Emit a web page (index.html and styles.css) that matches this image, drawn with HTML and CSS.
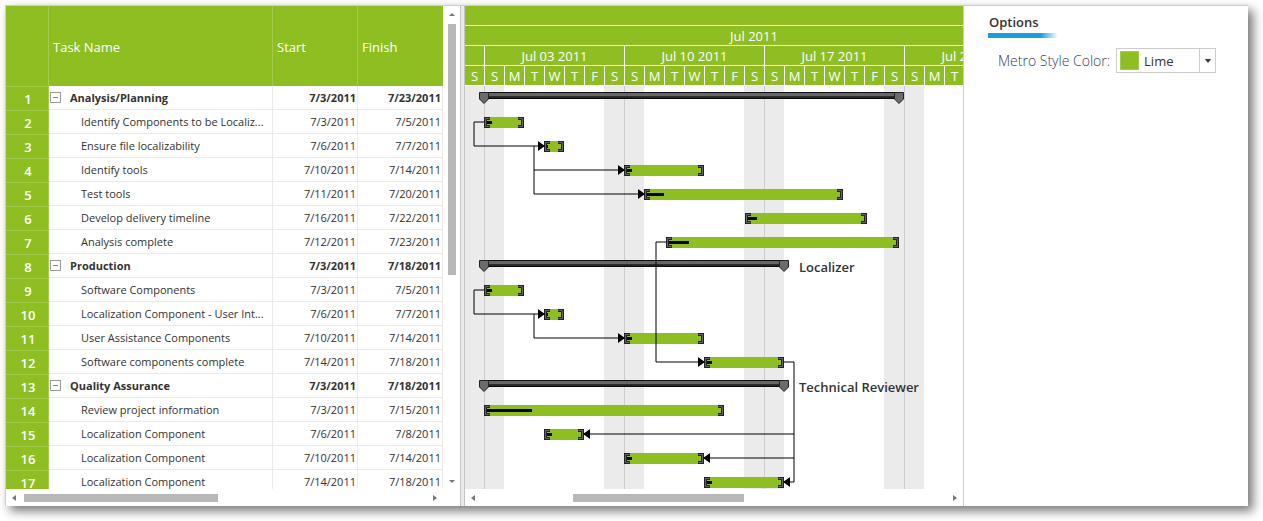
FILE: index.html
```html
<!DOCTYPE html>
<html lang="en">
<head>
<meta charset="utf-8">
<title>Gantt</title>
<link rel="stylesheet" href="styles.css">
</head>
<body>
<main class="panel">
  <section class="grid-pane">
    <div class="grid-main">
      <div class="grid-view">
        <table class="tasks">
          <colgroup><col class="col-num"><col class="col-name"><col class="col-date"><col class="col-date"></colgroup>
          <thead><tr><th></th><th>Task Name</th><th>Start</th><th>Finish</th></tr></thead>
          <tbody>
            <tr class="summary"><th>1</th><td><button class="toggle" aria-label="Collapse"></button>Analysis/Planning</td><td>7/3/2011</td><td>7/23/2011</td></tr>
            <tr><th>2</th><td>Identify Components to be Localiz...</td><td>7/3/2011</td><td>7/5/2011</td></tr>
            <tr><th>3</th><td>Ensure file localizability</td><td>7/6/2011</td><td>7/7/2011</td></tr>
            <tr><th>4</th><td>Identify tools</td><td>7/10/2011</td><td>7/14/2011</td></tr>
            <tr><th>5</th><td>Test tools</td><td>7/11/2011</td><td>7/20/2011</td></tr>
            <tr><th>6</th><td>Develop delivery timeline</td><td>7/16/2011</td><td>7/22/2011</td></tr>
            <tr><th>7</th><td>Analysis complete</td><td>7/12/2011</td><td>7/23/2011</td></tr>
            <tr class="summary"><th>8</th><td><button class="toggle" aria-label="Collapse"></button>Production</td><td>7/3/2011</td><td>7/18/2011</td></tr>
            <tr><th>9</th><td>Software Components</td><td>7/3/2011</td><td>7/5/2011</td></tr>
            <tr><th>10</th><td>Localization Component - User Int...</td><td>7/6/2011</td><td>7/7/2011</td></tr>
            <tr><th>11</th><td>User Assistance Components</td><td>7/10/2011</td><td>7/14/2011</td></tr>
            <tr><th>12</th><td>Software components complete</td><td>7/14/2011</td><td>7/18/2011</td></tr>
            <tr class="summary"><th>13</th><td><button class="toggle" aria-label="Collapse"></button>Quality Assurance</td><td>7/3/2011</td><td>7/18/2011</td></tr>
            <tr><th>14</th><td>Review project information</td><td>7/3/2011</td><td>7/15/2011</td></tr>
            <tr><th>15</th><td>Localization Component</td><td>7/6/2011</td><td>7/8/2011</td></tr>
            <tr><th>16</th><td>Localization Component</td><td>7/10/2011</td><td>7/14/2011</td></tr>
            <tr><th>17</th><td>Localization Component</td><td>7/14/2011</td><td>7/18/2011</td></tr>
          </tbody>
        </table>
      </div>
      <div class="vbar"><i class="arrow up"></i><div class="track"><div class="thumb"></div></div><i class="arrow down"></i></div>
    </div>
    <div class="hbar hbar-grid"><i class="arrow left"></i><div class="track"><div class="thumb"></div></div><i class="arrow right"></i></div>
  </section>
  <div class="splitter"></div>
  <section class="chart-pane">
    <div class="timeline">
      <div class="scale"></div>
      <div class="scale months"><span>Jul 2011</span></div>
      <div class="scale weeks"><span></span><span>Jul 03 2011</span><span>Jul 10 2011</span><span>Jul 17 2011</span><span>Jul 24 2011</span></div>
      <div class="scale days"><span>S</span><span>S</span><span>M</span><span>T</span><span>W</span><span>T</span><span>F</span><span>S</span><span>S</span><span>M</span><span>T</span><span>W</span><span>T</span><span>F</span><span>S</span><span>S</span><span>M</span><span>T</span><span>W</span><span>T</span><span>F</span><span>S</span><span>S</span><span>M</span><span>T</span></div>
    </div>
    <svg class="chart">
      <defs>
        <linearGradient id="sum" x1="0" y1="0" x2="0" y2="1">
          <stop offset="0" stop-color="#111"/><stop offset=".14" stop-color="#111"/><stop offset=".15" stop-color="#666"/><stop offset=".57" stop-color="#666"/><stop offset=".58" stop-color="#333"/><stop offset=".8" stop-color="#222"/><stop offset="1" stop-color="#000"/>
        </linearGradient>
        <symbol id="pin" width="10" height="13" overflow="visible"><path d="M.5 .5h9v6.500l-4.500 4.500l-4.500-4.500z" fill="#6c6c6c" stroke="#222"/></symbol>
        <symbol id="lb" width="6" height="11"><path d="M0 0h6v3h-3v5h3v3h-6z" fill="#222"/><path d="M5.500 1.500h-4v8h4" fill="none" stroke="#666"/></symbol>
        <symbol id="rb" width="6" height="11"><path d="M6 0h-6v3h3v5h-3v3h6z" fill="#222"/><path d="M.5 1.500h4v8h-4" fill="none" stroke="#666"/></symbol>
      </defs>
      <g class="weekend"><rect x="0" width="39" height="100%"/><rect x="139" width="40" height="100%"/><rect x="279" width="40" height="100%"/><rect x="419" width="40" height="100%"/></g>
      <g class="week-line"><rect x="19" width="1" height="100%"/><rect x="159" width="1" height="100%"/><rect x="299" width="1" height="100%"/><rect x="439" width="1" height="100%"/></g>

      <g fill="url(#sum)"><rect x="19" y="6" width="415" height="7"/><rect x="19" y="174" width="300" height="7"/><rect x="19" y="294" width="300" height="7"/></g>
      <use href="#pin" x="14" y="6"/><use href="#pin" x="429" y="6"/>
      <use href="#pin" x="14" y="174"/><use href="#pin" x="314" y="174"/>
      <use href="#pin" x="14" y="294"/><use href="#pin" x="314" y="294"/>

      <g class="bar">
        <rect x="19" y="31" width="40" height="11"/>
        <rect x="79" y="55" width="20" height="11"/>
        <rect x="159" y="79" width="80" height="11"/>
        <rect x="179" y="103" width="199" height="11"/>
        <rect x="280" y="127" width="122" height="11"/>
        <rect x="201" y="151" width="233" height="11"/>
        <rect x="19" y="199" width="40" height="11"/>
        <rect x="79" y="223" width="20" height="11"/>
        <rect x="159" y="247" width="80" height="11"/>
        <rect x="239" y="271" width="80" height="11"/>
        <rect x="19" y="319" width="240" height="11"/>
        <rect x="79" y="343" width="40" height="11"/>
        <rect x="159" y="367" width="80" height="11"/>
        <rect x="239" y="391" width="80" height="11"/>
      </g>
      <use href="#lb" x="19" y="31"/><use href="#rb" x="53" y="31"/>
      <use href="#lb" x="79" y="55"/><use href="#rb" x="93" y="55"/>
      <use href="#lb" x="159" y="79"/><use href="#rb" x="233" y="79"/>
      <use href="#lb" x="179" y="103"/><use href="#rb" x="372" y="103"/>
      <use href="#lb" x="280" y="127"/><use href="#rb" x="396" y="127"/>
      <use href="#lb" x="201" y="151"/><use href="#rb" x="428" y="151"/>
      <use href="#lb" x="19" y="199"/><use href="#rb" x="53" y="199"/>
      <use href="#lb" x="79" y="223"/><use href="#rb" x="93" y="223"/>
      <use href="#lb" x="159" y="247"/><use href="#rb" x="233" y="247"/>
      <use href="#lb" x="239" y="271"/><use href="#rb" x="313" y="271"/>
      <use href="#lb" x="19" y="319"/><use href="#rb" x="253" y="319"/>
      <use href="#lb" x="79" y="343"/><use href="#rb" x="113" y="343"/>
      <use href="#lb" x="159" y="367"/><use href="#rb" x="233" y="367"/>
      <use href="#lb" x="239" y="391"/><use href="#rb" x="313" y="391"/>
      <g class="progress">
        <rect x="22" y="35" width="5" height="3"/><rect x="82" y="59" width="1" height="3"/><rect x="162" y="83" width="5" height="3"/>
        <rect x="182" y="107" width="17" height="3"/><rect x="283" y="131" width="9" height="3"/><rect x="204" y="155" width="20" height="3"/>
        <rect x="22" y="203" width="5" height="3"/><rect x="82" y="227" width="1" height="3"/><rect x="162" y="251" width="5" height="3"/>
        <rect x="242" y="275" width="5" height="3"/><rect x="22" y="323" width="45" height="3"/><rect x="82" y="347" width="5" height="3"/>
        <rect x="162" y="371" width="5" height="3"/><rect x="242" y="395" width="5" height="3"/>
      </g>
      <g class="link">
        <path d="M19 36H9V60H74M69 60V108H174M69 84H154"/>
        <path d="M201 156H191V276H234"/>
        <path d="M19 204H9V228H74M69 228V252H154"/>
        <path d="M319 276H329V396H324M329 348H124M329 372H244"/>
      </g>
      <g class="tip">
        <path d="M73 55l7 5l-7 5zM153 79l7 5l-7 5zM173 103l7 5l-7 5zM73 223l7 5l-7 5zM153 247l7 5l-7 5zM233 271l7 5l-7 5z"/>
        <path d="M125 343l-7 5l7 5zM245 367l-7 5l7 5zM325 391l-7 5l7 5z"/>
      </g>
      <text x="334" y="186">Localizer</text>
      <text x="334" y="306">Technical Reviewer</text>
    </svg>
    <div class="hbar hbar-chart"><i class="arrow left"></i><div class="track"><div class="thumb"></div></div><i class="arrow right"></i></div>
  </section>
  <aside class="options">
    <h2>Options</h2>
    <div class="field">
      <label for="color">Metro Style Color:</label>
      <div class="combo">
        <select id="color"><option>Lime</option></select>
        <span class="swatch"></span>
        <span class="drop"><i class="caret"></i></span>
      </div>
    </div>
  </aside>
</main>
</body>
</html>
```
FILE: styles.css
```css
* { box-sizing: border-box; }
body {
  margin: 0;
  overflow: hidden;
  background: #fff;
  color: #333;
  font-family: "Open Sans", "Noto Sans", sans-serif;
  font-size: 12px;
}
.panel {
  display: flex;
  height: calc(100vh - 20px);
  margin: 5px 15px 15px 5px;
  border: 1px solid #ccc;
  border-right: 0;
  border-bottom: 0;
  background: #fff;
  box-shadow: 5px 5px 10px #777;
}

/* Task grid */
.grid-pane { display: flex; flex-direction: column; flex: 0 0 454px; min-width: 0; }
.grid-main { display: flex; flex: 1; min-height: 0; }
.grid-view { flex: 1; min-width: 0; overflow: hidden; }
.tasks { width: 100%; table-layout: fixed; border-collapse: separate; border-spacing: 0; }
.col-num { width: 43px; }
.col-date { width: 85px; }
.tasks th { background: #8ebe22; color: #fff; font-weight: 400; }
.tasks thead th {
  height: 80px;
  padding: 2px 0 0 4px;
  border-right: 1px solid #a3cb4c;
  text-align: left;
  font-size: 13px;
}
.tasks thead th:last-child { border-right-color: #8ebe22; }
.tasks tbody th {
  height: 24px;
  padding: 0 0 0 2px;
  border-top: 1px solid #a3cb4c;
  border-right: 1px solid #a3cb4c;
  text-align: center;
  font-size: 13px;
  font-weight: 600;
  line-height: 20px;
}
.tasks td {
  height: 24px;
  padding: 0 1px;
  border-right: 1px solid #ebebeb;
  border-bottom: 1px solid #ebebeb;
  text-align: right;
  white-space: nowrap;
  font-size: 11px;
  line-height: 23px;
}
.tasks td:nth-child(2) { padding-left: 32px; text-align: left; }
.tasks .summary td { font-weight: 700; }
.tasks .summary td:nth-child(2) { padding-left: 1px; }
.toggle {
  display: inline-block;
  width: 11px;
  height: 11px;
  margin: 0 9px 0 0;
  padding: 0;
  border: 1px solid #999;
  background: linear-gradient(#888, #888) center / 5px 1px no-repeat #fff;
}

/* Scrollbars */
.vbar { display: flex; flex-direction: column; align-items: center; justify-content: space-between; width: 17px; padding: 7px 0 6px; gap: 8px; }
.vbar .track { flex: 1; width: 8px; }
.vbar .thumb { width: 8px; height: 56%; background: #b8b8b8; }
.hbar { display: flex; align-items: center; flex: 0 0 17px; gap: 8px; }
.hbar-grid { padding: 0 23px 0 6px; }
.hbar-chart { padding: 0 6px; }
.hbar .track { flex: 1; }
.hbar .thumb { height: 8px; background: #b8b8b8; }
.hbar-grid .thumb { width: 194px; }
.hbar-chart .thumb { width: 171px; margin-left: 90px; }
.arrow { width: 0; height: 0; border: 3px solid transparent; }
.arrow.up { border-top: 0; border-bottom-color: #777; }
.arrow.down { border-bottom: 0; border-top-color: #777; }
.arrow.left { border-left: 0; border-right: 4px solid #777; }
.arrow.right { border-right: 0; border-left: 4px solid #777; }

.splitter { flex: 0 0 5px; border: 1px solid #c4c4c8; background: #ebebeb; border-width: 0 1px; }

/* Chart */
.chart-pane { display: flex; flex: 1; flex-direction: column; min-width: 0; border-right: 1px solid #ccc; }
.timeline { overflow: hidden; background: #8ebe22; color: #fff; }
.scale { display: flex; height: 20px; border-bottom: 1px solid #fff; font-size: 13px; line-height: 20px; }
.scale span { flex: none; text-align: center; white-space: nowrap; }
.months span { width: 620px; margin-left: -21px; }
.weeks span { width: 140px; border-left: 1px solid #fff; }
.weeks span:first-child { margin-left: -121px; }
.days span { width: 20px; border-left: 1px solid #fff; }
.days span:first-child { margin-left: -1px; }
.chart { display: block; flex: 1; width: 100%; min-height: 0; }
.chart text { fill: #333; font-size: 13px; font-weight: 600; }
.weekend { fill: #ebebeb; }
.week-line { fill: #ccc; }
.bar { fill: #8ebe22; }
.progress { fill: #000; }
.link { fill: none; stroke: #000; }
.tip { fill: #000; }

/* Options */
.options { flex: 0 0 284px; padding: 7px 24px; }
.options h2 {
  width: 70px;
  height: 25px;
  margin: 0;
  padding-left: 1px;
  background: linear-gradient(90deg, #159fdb 75%, #fff) bottom / 100% 5px no-repeat;
  font-size: 13px;
  font-weight: 600;
  line-height: 18px;
}
.field { display: flex; align-items: center; gap: 6px; margin-top: 10px; padding-left: 10px; }
.field label { flex: none; color: #34435c; font-size: 14px; font-weight: 300; }
.combo { position: relative; flex: 0 0 100px; }
.combo select {
  appearance: none;
  display: block;
  width: 100%;
  height: 25px;
  padding: 0 20px 0 27px;
  border: 1px solid #ccc;
  border-radius: 0;
  background: #fff;
  color: #333;
  font: 13px "Open Sans", "Noto Sans", sans-serif;
}
.swatch { position: absolute; top: 3px; left: 4px; width: 19px; height: 19px; border: 1px solid #a3cb4c; background: #8ebe22; pointer-events: none; }
.drop {
  position: absolute;
  top: 0;
  right: 0;
  display: flex;
  align-items: center;
  justify-content: center;
  width: 17px;
  height: 25px;
  border-left: 1px solid #ccc;
  pointer-events: none;
}
.caret { border: 3px solid transparent; border-top: 4px solid #333; border-bottom: 0; }
```
